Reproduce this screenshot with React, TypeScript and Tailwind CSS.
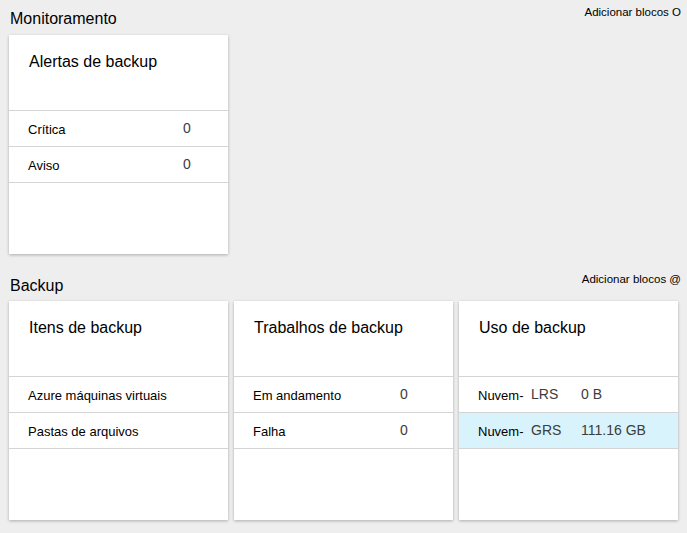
import React from "react";

type Row = { cells: string[]; highlight?: boolean };

interface TileProps {
  title: string;
  rows: Row[];
  widths: string[];
}

const font = { fontFamily: '"Liberation Sans", Arial, sans-serif' };

const Tile: React.FC<TileProps> = ({ title, rows, widths }) => (
  <div className="w-[219px] h-[219px] bg-white shadow-[0_1px_3px_rgba(0,0,0,0.28)] flex flex-col">
    <div className="h-[75px] shrink-0 pl-[20px] pt-[16px] text-[16px] text-black leading-[22px]">
      {title}
    </div>
    <div className="border-t border-[#d4d4d4]">
      {rows.map((row, i) => (
        <div
          key={i}
          className={`h-[36px] border-b border-[#d4d4d4] flex items-center pl-[19px] text-[13px] ${
            row.highlight ? "bg-[#d9f3fc]" : ""
          }`}
        >
          {row.cells.map((c, j) => (
            <span
              key={j}
              className={`${widths[j] ?? ""} ${
                j === 0 ? "text-black pt-[3px]" : "text-[#3c3c3c] text-[14px] pb-[1px]"
              }`}
            >
              {c}
            </span>
          ))}
        </div>
      ))}
    </div>
  </div>
);

// section title on the left, "add tiles" link on the right
const SectionHeader: React.FC<{ title: string; action: string; className?: string }> = ({
  title,
  action,
  className = "",
}) => (
  <div className={`flex justify-between items-start pl-[10px] pr-[6px] ${className}`}>
    <span className="text-[16px] text-black leading-[20px]">{title}</span>
    <span className="text-[11.5px] text-black leading-[14px] -mt-[4px]">{action}</span>
  </div>
);

export default function App() {
  return (
    <div className="w-[687px] h-[533px] bg-[#eeeeee] overflow-hidden" style={font}>
      <div className="pt-[9px]">
        <SectionHeader title="Monitoramento" action="Adicionar blocos O" />
      </div>
      <div className="pl-[9px] pt-[6px]">
        <Tile
          title="Alertas de backup"
          widths={["w-[155px]", ""]}
          rows={[{ cells: ["Crítica", "0"] }, { cells: ["Aviso", "0"] }]}
        />
      </div>
      <div className="pt-[22px]">
        <SectionHeader title="Backup" action="Adicionar blocos @" className="h-[25px]" />
      </div>
      <div className="pl-[9px] flex gap-[6px]">
        <Tile
          title="Itens de backup"
          widths={[""]}
          rows={[{ cells: ["Azure máquinas virtuais"] }, { cells: ["Pastas de arquivos"] }]}
        />
        <Tile
          title="Trabalhos de backup"
          widths={["w-[147px]", ""]}
          rows={[{ cells: ["Em andamento", "0"] }, { cells: ["Falha", "0"] }]}
        />
        <Tile
          title="Uso de backup"
          widths={["w-[53px]", "w-[50px]", ""]}
          rows={[
            { cells: ["Nuvem-", "LRS", "0 B"] },
            { cells: ["Nuvem-", "GRS", "111.16 GB"], highlight: true },
          ]}
        />
      </div>
    </div>
  );
}
